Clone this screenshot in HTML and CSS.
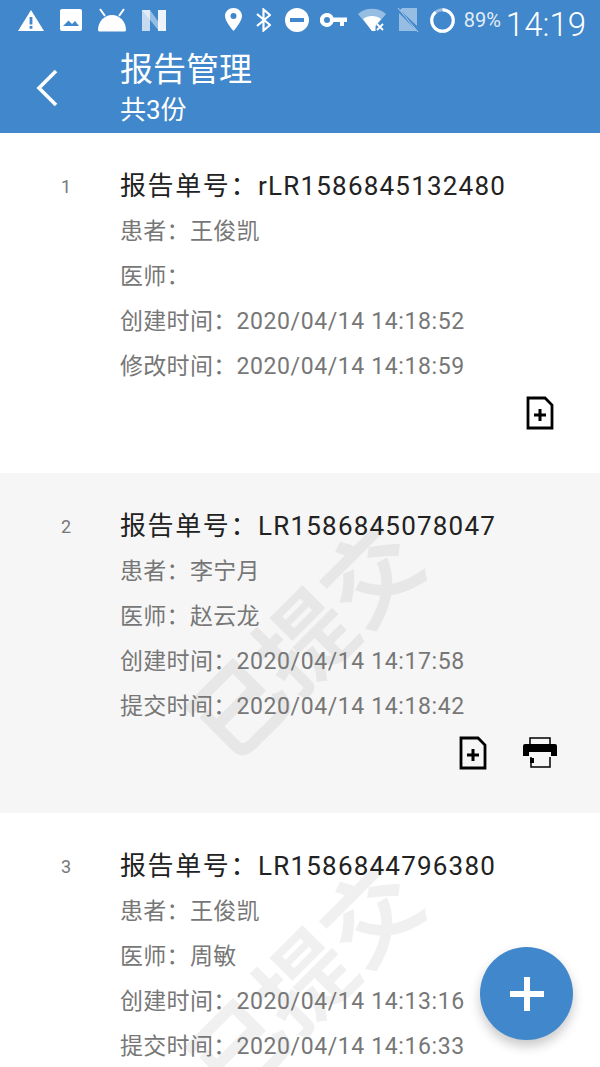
FILE: index.html
```html
<!DOCTYPE html>
<html>
<head>
<meta charset="utf-8" />
<title>报告管理</title>
<link rel="stylesheet" href="styles.css">
</head>
<body>
<div class="phone">
	<header class="top">
		<div class="status">
			<div class="status_left">
				<svg width="28" height="24" viewBox="0 0 28 24"><path fill="#fff" fill-rule="evenodd" d="M14 2 27 23H1ZM12.600 9v7.500h2.800V9ZM12.600 18v2.800h2.800V18Z"/></svg>
				<svg width="22" height="22" viewBox="0 0 22 22"><path fill="#fff" fill-rule="evenodd" d="M2 0h18a2 2 0 0 1 2 2v18a2 2 0 0 1-2 2H2a2 2 0 0 1-2-2V2a2 2 0 0 1 2-2ZM3 17h16l-4-5-3 3-2-2-1.500-1.500Z"/></svg>
				<svg width="30" height="24" viewBox="0 0 30 24"><path fill="#fff" d="M1 22C1 14 7 7 15 7s14 7 14 15c0 1-1 1.500-2 1.500H3C2 23.500 1 23 1 22Z"/><path stroke="#fff" stroke-width="2" d="M8 8 3 1M22 8l5-7"/></svg>
				<svg width="24" height="24" viewBox="0 0 24 24"><path fill="#fff" fill-opacity=".7" d="M0 2h8v21H0Z"/><path fill="#fff" fill-opacity=".9" d="M16 2h8v21h-8Z"/><path fill="#fff" d="M0 2h8l10 14v7h-1Z" fill-opacity=".45"/></svg>
			</div>
			<div class="status_right">
				<svg class="st_wide" width="17" height="24" viewBox="0 0 17 24"><path fill="#fff" fill-rule="evenodd" d="M8.500 0C13 0 17 3.500 17 8c0 5.500-8.500 15-8.500 15S0 13.500 0 8C0 3.500 4 0 8.500 0Zm0 5a3 3 0 1 0 0 6 3 3 0 0 0 0-6Z"/></svg>
				<svg class="st_wide" width="15" height="24" viewBox="0 0 15 24"><path fill="none" stroke="#fff" stroke-width="2.200" d="M1 6l13 11-6.500 5.500V1.500L14 7 1 18"/></svg>
				<svg width="24" height="24" viewBox="0 0 24 24"><path fill="#fff" fill-rule="evenodd" d="M12 0a12 12 0 1 1 0 24 12 12 0 0 1 0-24ZM5 10v4h14v-4Z"/></svg>
				<svg width="27" height="16" viewBox="0 0 27 16"><path fill="#fff" fill-rule="evenodd" d="M7 1a7 7 0 0 1 6.500 4.500H27v4.500h-3v4h-4v-4h-6.500A7 7 0 1 1 7 1Zm0 4a3 3 0 1 0 0 6 3 3 0 0 0 0-6Z"/></svg>
				<svg width="28" height="24" viewBox="0 0 28 24"><path fill="#fff" fill-opacity=".45" d="M0 6C7-1 21-1 28 6l-14 17Z"/><path fill="#fff" d="M5 11c5-4 13-4 18 0l-5.500 6.500V23H14Z"/><path stroke="#fff" stroke-width="1.800" d="M19 16l6 6M25 16l-6 6"/></svg>
				<svg width="22" height="26" viewBox="0 0 22 26"><path fill="#fff" fill-opacity=".45" d="M5 1h15v18L3 3ZM2 6l17 17v1H2Z"/><path stroke="#fff" stroke-opacity=".6" stroke-width="1" d="M1 1l20 24"/></svg>
				<svg width="25" height="25" viewBox="0 0 25 25"><circle cx="12.500" cy="12.500" r="10.800" fill="none" stroke="#fff" stroke-opacity=".45" stroke-width="3"/><circle cx="12.500" cy="12.500" r="10.800" fill="none" stroke="#fff" stroke-width="3" stroke-dasharray="60 68" transform="rotate(-90 12.500 12.500)"/></svg>
				<span class="battery">89%</span>
				<span class="clock">14:19</span>
			</div>
		</div>
		<div class="title_bar">
			<div class="back">
				<svg width="24" height="38" viewBox="0 0 24 38"><path fill="none" stroke="#fff" stroke-width="3.600" d="M21 2 4 19l17 17"/></svg>
			</div>
			<div class="title_text">
				<h1>报告管理</h1>
				<p>共3份</p>
			</div>
		</div>
	</header>
	<ul class="report_list">
		<li class="report">
			<span class="report_no">1</span>
			<div class="report_body">
				<h2>报告单号：<span>rLR1586845132480</span></h2>
				<p>患者：王俊凯</p>
				<p>医师：</p>
				<p>创建时间：<span>2020/04/14 14:18:52</span></p>
				<p>修改时间：<span>2020/04/14 14:18:59</span></p>
				<div class="actions">
					<svg class="act_icon" width="34" height="34" viewBox="0 0 34 34"><path fill="none" stroke="#000" stroke-width="2.800" d="M5 2h17l7 7v23H5Z"/><path stroke="#000" stroke-width="3" d="M11 19h12M17 13v12"/></svg>
				</div>
			</div>
		</li>
		<li class="report shade">
			<span class="report_no">2</span>
			<div class="report_body">
				<h2>报告单号：<span>LR1586845078047</span></h2>
				<p>患者：李宁月</p>
				<p>医师：赵云龙</p>
				<p>创建时间：<span>2020/04/14 14:17:58</span></p>
				<p>提交时间：<span>2020/04/14 14:18:42</span></p>
				<div class="actions">
					<svg class="act_icon" width="34" height="34" viewBox="0 0 34 34"><path fill="none" stroke="#000" stroke-width="2.800" d="M5 2h17l7 7v23H5Z"/><path stroke="#000" stroke-width="3" d="M11 19h12M17 13v12"/></svg>
					<svg class="act_icon" width="34" height="34" viewBox="0 0 34 34"><path fill="none" stroke="#000" stroke-width="1.500" d="M7 9V2h20v7M8 21v10h19V21"/><path fill="#000" d="M2 8h30a2 2 0 0 1 2 2v10h-6v-4H6v4H0V10a2 2 0 0 1 2-2Z"/><path fill="#000" d="M7 22h4v5H7z"/></svg>
				</div>
			</div>
			<div class="stamp">已提交</div>
		</li>
		<li class="report">
			<span class="report_no">3</span>
			<div class="report_body">
				<h2>报告单号：<span>LR1586844796380</span></h2>
				<p>患者：王俊凯</p>
				<p>医师：周敏</p>
				<p>创建时间：<span>2020/04/14 14:13:16</span></p>
				<p>提交时间：<span>2020/04/14 14:16:33</span></p>
			</div>
			<div class="stamp">已提交</div>
		</li>
	</ul>
	<div class="fab">
		<svg width="34" height="34" viewBox="0 0 34 34"><path stroke="#fff" stroke-width="6" d="M0 17h34M17 0v34"/></svg>
	</div>
</div>
</body>
</html>
```

FILE: styles.css
```css
html,body{margin: 0;padding: 0;}
body{font: normal 23px/45px Roboto, "Noto Sans CJK SC", sans-serif;color: #777;background-color: #fff;}
h1,h2,p,ul{margin: 0;padding: 0;font-weight: normal;}
ul{list-style: none;}
.phone{position: relative;width: 600px;height: 1067px;overflow: hidden;}

.top{height: 133px;background-color: #4087CB;color: #fff;}
.status{display: flex;justify-content: space-between;height: 42px;padding: 7px 14px 0 17px;box-sizing: border-box;}
.status_left,.status_right{display: flex;align-items: center;height: 26px;}
.status_left{gap: 15px;}
.status_right{gap: 11px;}
.st_wide{margin-right: 3px;}
.battery{font-size: 20px;line-height: 24px;margin-left: -2px;letter-spacing: 0;opacity: .85;}
.clock{font-size: 33px;line-height: 34px;font-weight: 300;margin: 9px 0 0 -6px;}

.title_bar{display: flex;}
.back{width: 120px;padding: 27px 0 0 35px;box-sizing: border-box;}
.title_text{padding-top: 2px;}
.title_text h1{font-size: 33px;line-height: 52px;}
.title_text p{font-size: 26px;line-height: 28px;}

.report{position: relative;display: flex;height: 340px;box-sizing: border-box;padding-top: 30px;overflow: hidden;}
.report.shade{background-color: #F6F6F6;}
.report_no{width: 120px;padding-left: 61px;box-sizing: border-box;font-size: 18px;line-height: 48px;}
.report_body{position: relative;z-index: 1;flex: 1;letter-spacing: .3px;}
.report_body p span{letter-spacing: .6px;}
.report_body h2{font-size: 26px;line-height: 46px;color: #222;letter-spacing: 1.600px;}
.report_body h2 span{letter-spacing: 1.200px;}
.actions{display: flex;justify-content: flex-end;align-items: center;gap: 33px;padding: 7px 43px 0 0;}

.stamp{position: absolute;left: 168px;top: 125px;width: 270px;font-size: 94px;line-height: 100px;text-align: center;font-weight: 700;white-space: nowrap;color: rgba(0,0,0,.06);transform: rotate(-45deg);}

.fab{position: absolute;left: 480px;top: 947px;z-index: 2;display: flex;align-items: center;justify-content: center;width: 93px;height: 93px;border-radius: 50%;background-color: #4087CB;box-shadow: 0 6px 12px rgba(0,0,0,.22);}
```
